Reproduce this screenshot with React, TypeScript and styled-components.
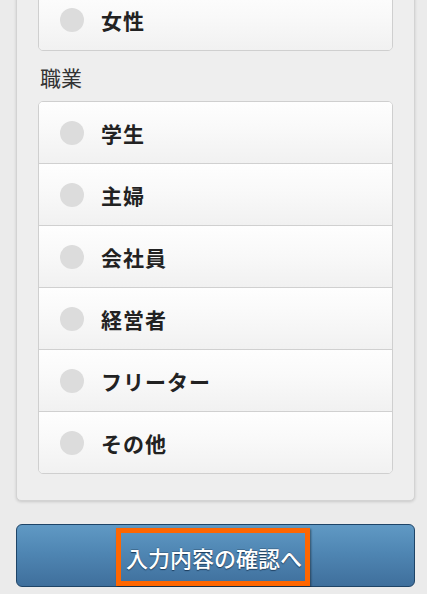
import React from "react";
import styled, { createGlobalStyle } from "styled-components";

const Global = createGlobalStyle`
  html, body {
    margin: 0;
    padding: 0;
    background: #ebebeb;
    overflow: hidden;
  }
  body {
    font-family: "Noto Sans CJK JP", "Noto Sans", sans-serif;
    color: #222;
  }
`;

const Page = styled.div`
  margin-top: -27px;
  padding: 0 12px 0 16px;
  display: flex;
  flex-direction: column;
`;

const Panel = styled.div`
  background: #eeeeee;
  border: 1px solid #d3d3d3;
  border-radius: 5px;
  box-shadow: 0 1px 3px rgba(0, 0, 0, 0.15);
  padding: 14px 21px 26px 21px;
  display: flex;
  flex-direction: column;
`;

const Label = styled.div`
  font-size: 21px;
  line-height: 24px;
  height: 24px;
  color: #333;
  margin: 14px 0 12px 2px;
  font-weight: 400;
`;

const List = styled.div`
  border: 1px solid #cfcfcf;
  border-radius: 5px;
  overflow: hidden;
  display: flex;
  flex-direction: column;
  background: #f6f6f6;
`;

const Row = styled.div`
  height: 61px;
  display: flex;
  align-items: center;
  gap: 17px;
  padding-left: 21px;
  background: linear-gradient(#fefefe 0%, #f9f9f9 45%, #f1f1f1 100%);
  & + & {
    border-top: 1px solid #d0d0d0;
  }
`;

const Radio = styled.span`
  width: 24px;
  height: 24px;
  border-radius: 50%;
  background: #dcdcdc;
  flex: none;
`;

const RowText = styled.span`
  font-size: 21px;
  font-weight: 700;
  color: #222;
  letter-spacing: 1px;
`;

const Button = styled.button`
  margin-top: 23px;
  height: 63px;
  border: 1px solid #1e4467;
  border-radius: 6px;
  background: linear-gradient(#6099c4 0%, #4f86b3 45%, #3f6f9c 100%);
  display: flex;
  align-items: center;
  justify-content: center;
  padding: 0;
  cursor: pointer;
`;

const ButtonLabel = styled.span`
  margin-right: 5px;
  margin-top: 3px;
  border: 5px solid #ff6600;
  box-shadow: 1px 1px 2px rgba(0, 0, 0, 0.45);
  height: 48px;
  padding: 0 3px 0 5px;
  display: flex;
  align-items: center;
  font-family: "Noto Sans CJK JP", "Noto Sans", sans-serif;
  font-size: 22px;
  font-weight: 500;
  color: #fff;
  text-shadow: 0 1px 1px #1c3b5a, 0 -1px 0 rgba(0, 0, 0, 0.2);
  white-space: nowrap;
`;

const genders = ["女性"];
const jobs = ["学生", "主婦", "会社員", "経営者", "フリーター", "その他"];

export default function App() {
  return (
    <>
      <Global />
      <Page>
        <Panel>
          <List>
            {genders.map((g) => (
              <Row key={g}>
                <Radio />
                <RowText>{g}</RowText>
              </Row>
            ))}
          </List>
          <Label>職業</Label>
          <List>
            {jobs.map((j) => (
              <Row key={j}>
                <Radio />
                <RowText>{j}</RowText>
              </Row>
            ))}
          </List>
        </Panel>
        <Button type="button">
          <ButtonLabel>入力内容の確認へ</ButtonLabel>
        </Button>
      </Page>
    </>
  );
}
